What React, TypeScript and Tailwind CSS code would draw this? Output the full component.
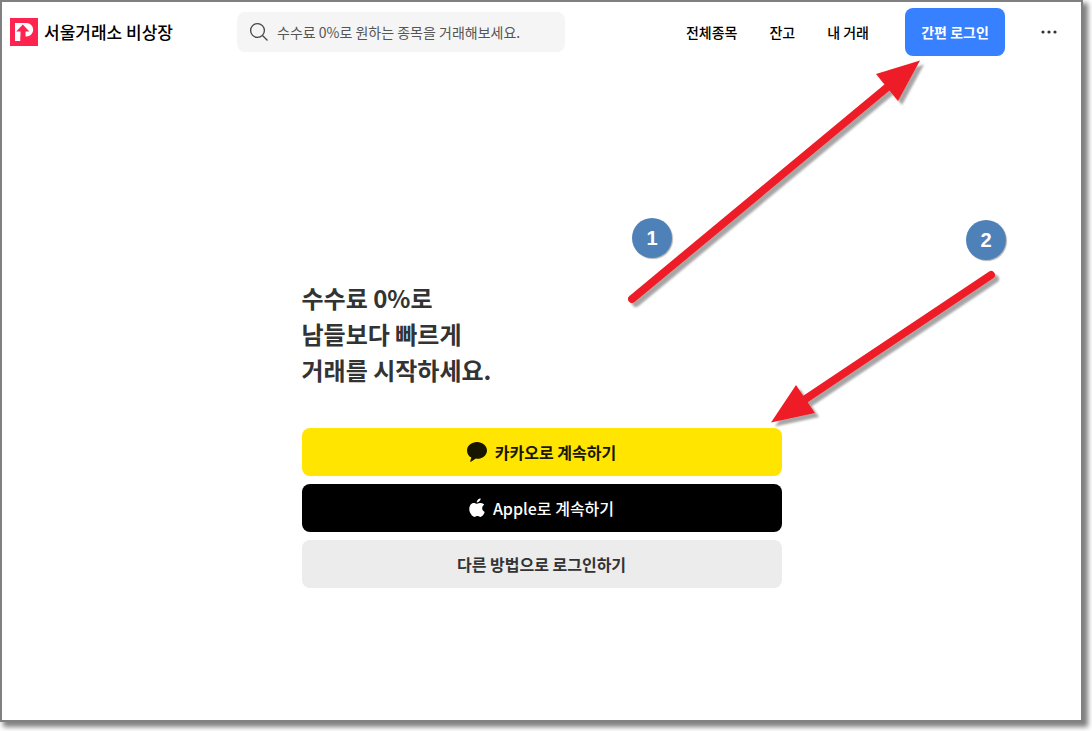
const navItems = ["전체종목", "잔고", "내 거래"];

function Logo() {
  return (
    <a href="#" className="flex w-[227px] shrink-0 items-center gap-1.5 text-[17px] leading-7 font-medium text-black">
      <svg viewBox="0 0 28 28" className="h-7 w-7" aria-hidden="true">
        <rect width="28" height="28" fill="#ff2350" />
        <path d="M5 5h11.500a6.700 6.700 0 0 1 0 13.400H10.500V23H5z" fill="#fff" />
        <path d="M12.800 6.600l6.600 6.800h-3.900V23h-5V13.400H6.200z" fill="#ff2350" />
      </svg>
      서울거래소 비상장
    </a>
  );
}

function SearchIcon() {
  return (
    <svg viewBox="0 0 20 20" className="h-5 w-5" fill="none" stroke="#444" strokeWidth="1.3" aria-hidden="true">
      <circle cx="8.500" cy="8.500" r="6.900" />
      <path d="M13.500 13.500 18.500 18.500" />
    </svg>
  );
}

function Header() {
  return (
    <header className="flex h-15 items-center pr-5 pl-2">
      <Logo />
      <label className="flex h-10 w-[328px] items-center gap-2 rounded-lg bg-[#f5f5f5] px-3">
        <SearchIcon />
        <input
          type="text"
          aria-label="종목 검색"
          placeholder="수수료 0%로 원하는 종목을 거래해보세요."
          className="min-w-0 flex-1 bg-transparent text-sm text-[#444] outline-none placeholder:text-[#555]"
        />
      </label>
      <nav className="ml-auto flex items-center gap-8 text-sm font-medium text-black">
        {navItems.map((item) => (
          <a key={item} href="#">
            {item}
          </a>
        ))}
      </nav>
      <button type="button" className="ml-9 h-12 w-[100px] rounded-lg bg-[#3780ff] text-sm font-bold text-white">
        간편 로그인
      </button>
      <button type="button" aria-label="더보기" className="ml-8 flex h-6 w-6 items-center justify-center">
        <svg viewBox="0 0 24 24" className="h-6 w-6" fill="#333">
          <circle cx="6" cy="12" r="1.6" />
          <circle cx="12" cy="12" r="1.6" />
          <circle cx="18" cy="12" r="1.6" />
        </svg>
      </button>
    </header>
  );
}

function KakaoIcon() {
  return (
    <svg viewBox="0 0 20 20" className="h-5 w-5" fill="#191600" aria-hidden="true">
      <path d="M10 0C4.500 0 0 3.700 0 8.400c0 3.100 1.700 5.700 4.400 7.200L3.200 19.300c-.1.500.3.700.7.400l5-3.100 1.100.1c5.500 0 10-3.700 10-8.300S15.500 0 10 0z" />
    </svg>
  );
}

function AppleIcon() {
  return (
    <svg viewBox="0 0 16 20" className="h-5 w-4" fill="#fff" aria-hidden="true">
      <path d="M15.500 14.600c-.3.700-.6 1.300-1 1.900-.5.800-1 1.300-1.300 1.600-.5.500-1.100.8-1.700.8-.4 0-.9-.1-1.500-.4s-1.100-.4-1.600-.4-1 .1-1.600.4-1.100.4-1.400.4c-.6 0-1.200-.3-1.800-.8-.4-.3-.9-.9-1.400-1.700C.8 14.900.3 13 .3 11.100c0-1.800.4-3.200 1.200-4.300.8-1.200 2-1.800 3.400-1.800.5 0 1.100.1 1.800.4.700.3 1.200.4 1.400.4.200 0 .7-.2 1.600-.5.800-.3 1.500-.4 2.100-.4 1.500.1 2.700.7 3.400 1.800-1.400.8-2 2-2 3.500 0 1.200.4 2.100 1.300 2.900.3.400.7.600 1.200.8zM11.700.4c0 1-.4 1.900-1.100 2.700-.8 1-1.800 1.500-2.900 1.400 0-1 .4-2 1.100-2.800.7-.8 1.900-1.300 2.900-1.300z" />
    </svg>
  );
}

function LoginPanel() {
  return (
    <main className="mx-auto w-full max-w-[480px] pt-[218px]">
      <h1 className="text-2xl leading-9 font-bold text-[#333]">
        수수료 0%로
        <br />
        남들보다 빠르게
        <br />
        거래를 시작하세요.
      </h1>
      <div className="mt-10 flex flex-col gap-2 font-bold">
        <button type="button" className="flex h-12 items-center justify-center gap-2 rounded-lg bg-[#ffe500] text-[#191600]">
          <KakaoIcon />
          카카오로 계속하기
        </button>
        <button type="button" className="flex h-12 items-center justify-center gap-2 rounded-lg bg-black font-medium text-white">
          <AppleIcon />
          Apple로 계속하기
        </button>
        <button type="button" className="h-12 rounded-lg bg-[#ececec] text-[#333]">
          다른 방법으로 로그인하기
        </button>
      </div>
    </main>
  );
}

// numbered steps and arrows drawn over the page
function Annotations() {
  return (
    <div className="pointer-events-none absolute inset-0">
      <svg width="1079" height="718" viewBox="2 2 1079 718" className="absolute top-0 left-0" aria-hidden="true">
        <defs>
          <filter id="arrow-shadow" x="-10%" y="-10%" width="120%" height="120%">
            <feDropShadow dx="4" dy="4" stdDeviation="1.2" floodColor="#000" floodOpacity="0.35" />
          </filter>
        </defs>
        <g fill="#ee1c25" stroke="#ee1c25" filter="url(#arrow-shadow)">
          <path d="M632 299 890 85" strokeWidth="8" strokeLinecap="round" />
          <path d="M920 60.500 876 74 898 101z" stroke="none" />
          <path d="M991 275 804 400" strokeWidth="8" strokeLinecap="round" />
          <path d="M771 422.500 796 385 815 413z" stroke="none" />
        </g>
      </svg>
      <span className="absolute top-[216px] left-[630px] flex h-10 w-10 items-center justify-center rounded-full bg-[#4f81b9] font-['Liberation_Sans',sans-serif] text-xl font-bold text-white shadow-[1px_1px_1px_rgba(0,0,0,0.3)]">
        1
      </span>
      <span className="absolute top-[218px] left-[964px] flex h-10 w-10 items-center justify-center rounded-full bg-[#4f81b9] font-['Liberation_Sans',sans-serif] text-xl font-bold text-white shadow-[1px_1px_1px_rgba(0,0,0,0.3)]">
        2
      </span>
    </div>
  );
}

export default function App() {
  return (
    <div className="flex min-h-screen bg-white pr-[9px] pb-[9px] font-['Noto_Sans_CJK_KR',sans-serif]">
      <div className="relative flex-1 border-2 border-[#808080] bg-white shadow-[4px_4px_5px_1px_rgba(0,0,0,0.5)]">
        <Header />
        <LoginPanel />
        <Annotations />
      </div>
    </div>
  );
}
